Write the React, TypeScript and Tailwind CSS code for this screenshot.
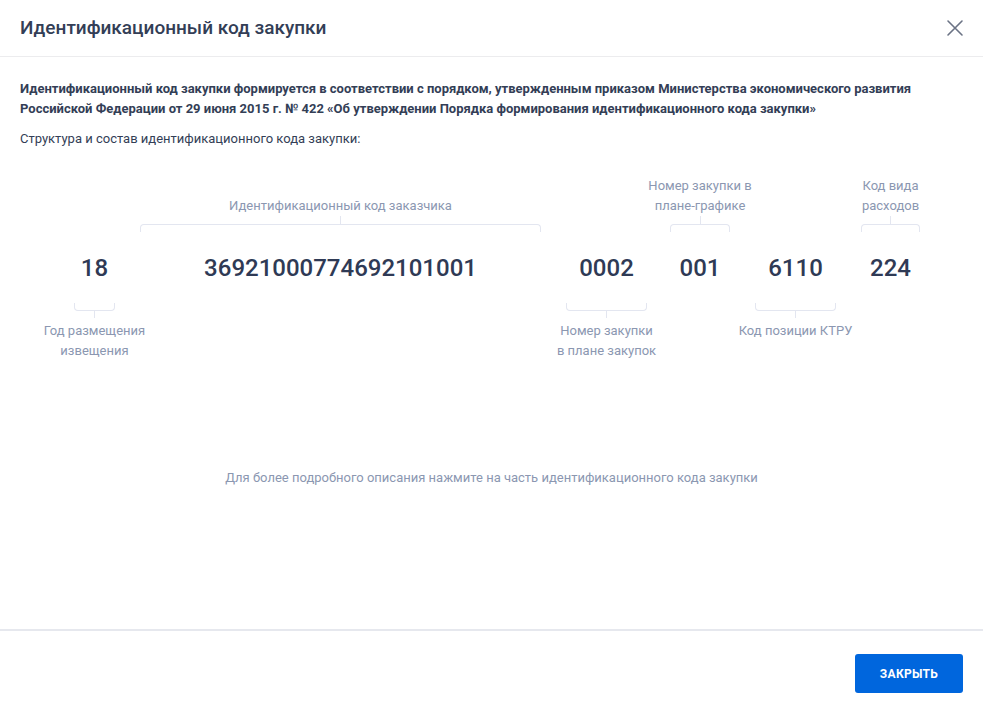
import React from "react";

type Seg = {
  value: string;
  width: number;
  ml: number;
  top?: string[];
  bottom?: string[];
};

const segs: Seg[] = [
  { value: "18", width: 41, ml: 54, bottom: ["Год размещения", "извещения"] },
  { value: "36921000774692101001", width: 401, ml: 25, top: ["Идентификационный код заказчика"] },
  { value: "0002", width: 81, ml: 25, bottom: ["Номер закупки", "в плане закупок"] },
  { value: "001", width: 60, ml: 23, top: ["Номер закупки в", "плане-графике"] },
  { value: "6110", width: 81, ml: 25, bottom: ["Код позиции КТРУ"] },
  { value: "224", width: 59, ml: 25, top: ["Код вида", "расходов"] },
];

function Column({ s }: { s: Seg }) {
  return (
    <div className="flex flex-col items-center shrink-0" style={{ width: s.width, marginLeft: s.ml }}>
      <div className="h-[56px] w-full flex flex-col items-center justify-end">
        {s.top && (
          <>
            <div className="w-max text-center text-[13px] leading-[20px] text-[#8b97b1]">
              {s.top.map((t) => (
                <div key={t}>{t}</div>
              ))}
            </div>
            <div className="w-px h-[8px] bg-[#e3e6f0]" />
            <div className="w-full h-[8px] border-x border-t border-[#e3e6f0] rounded-t-[4px]" />
          </>
        )}
      </div>
      <div className="h-[71px] w-full flex items-center justify-center">
        <div className="w-max text-[24px] leading-[32px] font-medium text-[#2f3a55] cursor-pointer">{s.value}</div>
      </div>
      <div className="h-[60px] w-full flex flex-col items-center">
        {s.bottom && (
          <>
            <div className="w-full h-[8px] border-x border-b border-[#e3e6f0] rounded-b-[4px]" />
            <div className="w-px h-[7px] bg-[#e3e6f0]" />
            <div className="mt-[3px] w-max text-center text-[13px] leading-[20px] text-[#8b97b1]">
              {s.bottom.map((t) => (
                <div key={t}>{t}</div>
              ))}
            </div>
          </>
        )}
      </div>
    </div>
  );
}

export default function App() {
  return (
    <div className="w-[983px] h-[715px] bg-white flex flex-col overflow-hidden" style={{ fontFamily: "Roboto, 'Noto Sans', sans-serif" }}>
      <div className="h-[57px] shrink-0 flex items-center justify-between pl-[20px] pr-[18px] border-b border-[#ececee]">
        <h1 className="text-[19px] font-medium text-[#333e56] leading-[24px]">Идентификационный код закупки</h1>
        <button className="w-[20px] h-[20px] flex items-center justify-center text-[#6b7385]">
          <svg width="18" height="18" viewBox="0 0 18 18" fill="none" stroke="currentColor" strokeWidth="1.6" strokeLinecap="round">
            <path d="M2 2L16 16M16 2L2 16" />
          </svg>
        </button>
      </div>
      <div className="flex-1 flex flex-col px-[20px] pt-[22px]">
        <p className="text-[13px] leading-[20px] font-bold text-[#333e56]">
          Идентификационный код закупки формируется в соответствии с порядком, утвержденным приказом Министерства экономического развития Российской Федерации от 29 июня 2015 г. № 422 «Об утверждении Порядка формирования идентификационного кода закупки»
        </p>
        <p className="mt-[10px] text-[13px] leading-[20px] text-[#333e56]">Структура и состав идентификационного кода закупки:</p>
        <div className="mt-[27px] flex">
          {segs.map((s) => (
            <Column key={s.value} s={s} />
          ))}
        </div>
        <p className="mt-[105px] text-center text-[13px] leading-[20px] text-[#8b97b1]">
          Для более подробного описания нажмите на часть идентификационного кода закупки
        </p>
      </div>
      <div className="h-[86px] shrink-0 border-t-2 border-[#e6e8ee] flex items-start justify-end pt-[23px] pr-[20px]">
        <button className="w-[108px] h-[39px] rounded-[3px] bg-[#0066dd] text-white text-[12px] font-bold tracking-[0.3px]">
          ЗАКРЫТЬ
        </button>
      </div>
    </div>
  );
}
